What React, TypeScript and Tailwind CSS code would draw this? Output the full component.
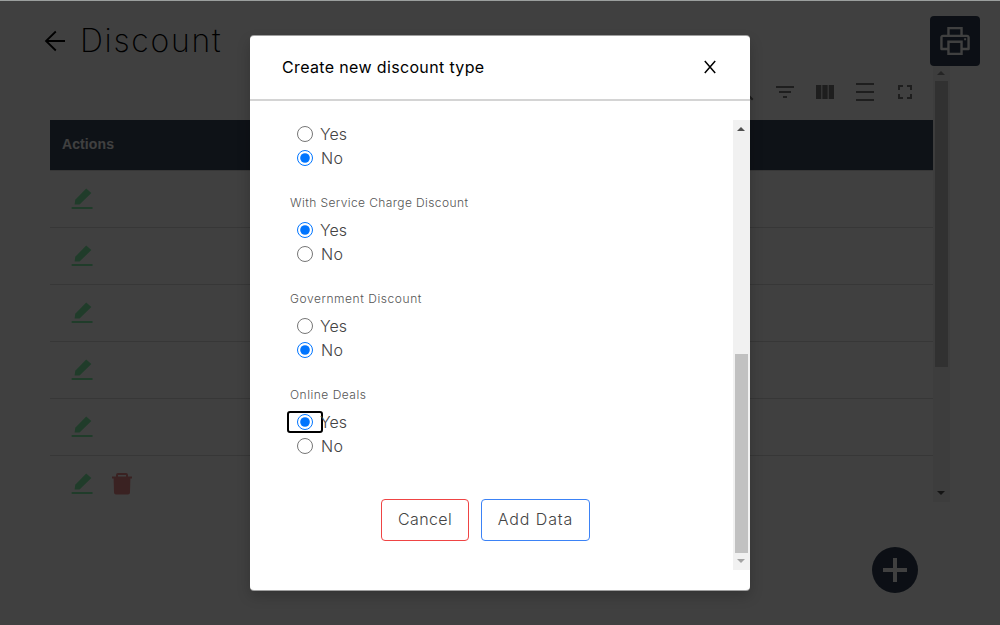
import React from "react";
import { AiOutlinePrinter } from "react-icons/ai";
import { MdFilterList, MdViewColumn, MdFullscreen, MdSearch } from "react-icons/md";

type Choice = "yes" | "no";

function EditIcon() {
  return (
    <svg className="h-6 w-6 text-[#80f0a8]" viewBox="0 0 24 24" fill="currentColor">
      <path d="M4.6 17.600 5.200 12.800 16.200 1.500 21.400 6 9.600 17.600z" />
      <rect x="1.400" y="20" width="21.400" height="2" rx="1" />
    </svg>
  );
}

function TrashIcon() {
  return (
    <svg className="h-6 w-6 text-[#e78686]" viewBox="0 0 24 24" fill="currentColor">
      <path d="M6 4.500V3q0-2 2-2h8q2 0 2 2v1.500h4v2h-1.600l-.4 14q0 2-2 2H6q-2 0-2-2L3.600 6.500H2v-2zM8 4.500h8V3H8z" />
    </svg>
  );
}

function Arrow({ up, className }: { up?: boolean; className: string }) {
  return (
    <svg className={className} width="8" height="4" viewBox="0 0 8 4" fill="currentColor">
      <path d={up ? "M0 4 4 0 8 4z" : "M0 0 4 4 8 0z"} />
    </svg>
  );
}

function Option({ name, value, checked, focused }: { name: string; value: Choice; checked: boolean; focused?: boolean }) {
  return (
    <label className="flex h-6 items-center">
      <span
        className={
          focused
            ? "-mr-[3px] -ml-[3px] flex h-[22px] w-9 items-center justify-center rounded-[3px] border-2 border-black"
            : "flex w-[30px] justify-center"
        }
      >
        <input type="radio" name={name} defaultChecked={checked} className="m-0 h-4 w-4 outline-none" />
      </span>
      <span
        className={
          value === "yes"
            ? "text-[16px] leading-6 font-light text-[#444]"
            : "pl-px text-[16px] leading-6 font-light tracking-[0.400px] text-[#444]"
        }
      >
        {value === "yes" ? "Yes" : "No"}
      </span>
    </label>
  );
}

type GroupProps = { title?: string; name: string; selected: Choice; focused?: boolean; tracking?: string };

function Group({ title, name, selected, focused, tracking }: GroupProps) {
  return (
    <fieldset className="mb-6">
      {title && (
        <div className="flex h-6 items-start">
          <span className={`text-[12px] leading-[17px] font-light text-[#555] ${tracking}`}>{title}</span>
        </div>
      )}
      <Option name={name} value="yes" checked={selected === "yes"} focused={focused} />
      <Option name={name} value="no" checked={selected === "no"} />
    </fieldset>
  );
}

export default function App() {
  return (
    <div className="relative h-[625px] w-[1000px] overflow-hidden bg-white font-['Inter',sans-serif]">
      <header className="flex h-16 items-start justify-between pr-5 pl-[43px]">
        <div className="flex items-center pt-[17px]">
          <svg className="h-6 w-6" viewBox="0 0 24 24" fill="none" stroke="black" strokeWidth="1.8">
            <path d="M22 12H3M12.800 2.500 3 12l9.800 9.500" />
          </svg>
          <h1 className="ml-[13px] text-[32px] leading-[48px] font-extralight tracking-[1.700px] text-black">Discount</h1>
        </div>
        <button className="z-10 mt-4 flex h-[50px] w-[50px] items-center justify-center rounded-[4px] bg-[#303f54]">
          <AiOutlinePrinter className="h-9 w-9 text-white" />
        </button>
      </header>

      <main className="ml-[50px] flex h-[438px] w-[900px]">
        <section className="w-[883px] overflow-hidden">
          <div className="flex h-14 items-center justify-end gap-4 pr-4 text-[#777]">
            <MdSearch className="h-6 w-6" />
            <MdFilterList className="h-6 w-6" />
            <MdViewColumn className="h-6 w-6" />
            <svg className="h-6 w-6" viewBox="0 0 24 24" fill="currentColor">
              <path d="M3 3h18v2H3zM3 11h18v2H3zM3 19h18v2H3z" />
            </svg>
            <MdFullscreen className="h-6 w-6" />
          </div>
          <div className="flex h-[50px] items-center bg-[#38485c] px-3 pb-[2px] font-['Liberation_Sans',sans-serif] text-[14px] font-bold tracking-[0.1px] text-white">
            Actions
          </div>
          <div className="border-t border-[#dcdcdc]">
            {[0, 1, 2, 3, 4, 5].map((row) => (
              <div key={row} className="flex h-[57px] items-center gap-4 border-b border-[#dcdcdc] pl-5">
                <EditIcon />
                {row === 5 && <TrashIcon />}
              </div>
            ))}
          </div>
        </section>
        <div className="flex w-[17px] flex-col items-start bg-[#f1f1f1] pl-[2px]">
          <Arrow up className="mt-[7px] mb-[6px] ml-[2px] text-[#909090]" />
          <div className="h-[286px] w-[13px] bg-[#c1c1c1]" />
          <Arrow className="mt-auto mb-[7px] ml-[2px] text-[#505050]" />
        </div>
      </main>

      <button className="mt-[45px] ml-[872px] flex h-[46px] w-[46px] items-center justify-center rounded-full bg-[#303f54]">
        <svg className="h-6 w-6" viewBox="0 0 24 24" fill="white">
          <path d="M10 0h4v10h10v4H14v10h-4V14H0v-4h10z" />
        </svg>
      </button>

      <div className="absolute inset-0 z-20 border-t border-[#9b9f9e] bg-black/75" />

      <div className="absolute top-9 left-[250px] z-30 flex h-[554px] w-[500px] flex-col rounded-[4px] bg-white shadow-[0_-1px_0_#9f9f9f,0_1px_0_#9f9f9f,0_6px_14px_rgba(0,0,0,0.2)]">
        <div className="flex h-[65px] shrink-0 items-center justify-between border-b-2 border-[#d4d4d4] pr-[33px] pb-px pl-8">
          <h2 className="text-[16px] leading-6 font-normal tracking-[0.35px] text-black">Create new discount type</h2>
          <svg className="h-[14px] w-[14px]" viewBox="0 0 14 14" fill="none" stroke="black" strokeWidth="1.500">
            <path d="M1.800 1 12.200 13M12.200 1 1.800 13" />
          </svg>
        </div>
        <div className="mt-[19px] flex h-[450px] shrink-0">
          <div className="w-[483px] overflow-hidden pt-[2px] pl-10">
            <Group name="first" selected="no" />
            <Group title="With Service Charge Discount" name="service" selected="yes" tracking="tracking-[0.400px]" />
            <Group title="Government Discount" name="government" selected="no" tracking="tracking-[0.560px]" />
            <Group title="Online Deals" name="online" selected="yes" focused tracking="tracking-[0.500px]" />
            <div className="mt-[41px] flex gap-3 pl-[91px]">
              <button className="h-[42px] w-[88px] rounded-[4px] border border-[#ef4444] pb-[2px] text-[16px] font-light tracking-[0.400px] text-[#444]">
                Cancel
              </button>
              <button className="h-[42px] w-[109px] rounded-[4px] border border-[#3b82f6] pb-[2px] text-[16px] font-light tracking-[0.900px] text-[#444]">
                Add Data
              </button>
            </div>
          </div>
          <div className="flex w-[17px] flex-col items-start bg-[#f1f1f1] pl-[2px]">
            <Arrow up className="mt-[7px] ml-[2px] text-[#505050]" />
            <div className="mt-auto h-[199px] w-[13px] bg-[#c1c1c1]" />
            <Arrow className="mt-[6px] mb-[7px] ml-[2px] text-[#a3a3a3]" />
          </div>
        </div>
      </div>
    </div>
  );
}
